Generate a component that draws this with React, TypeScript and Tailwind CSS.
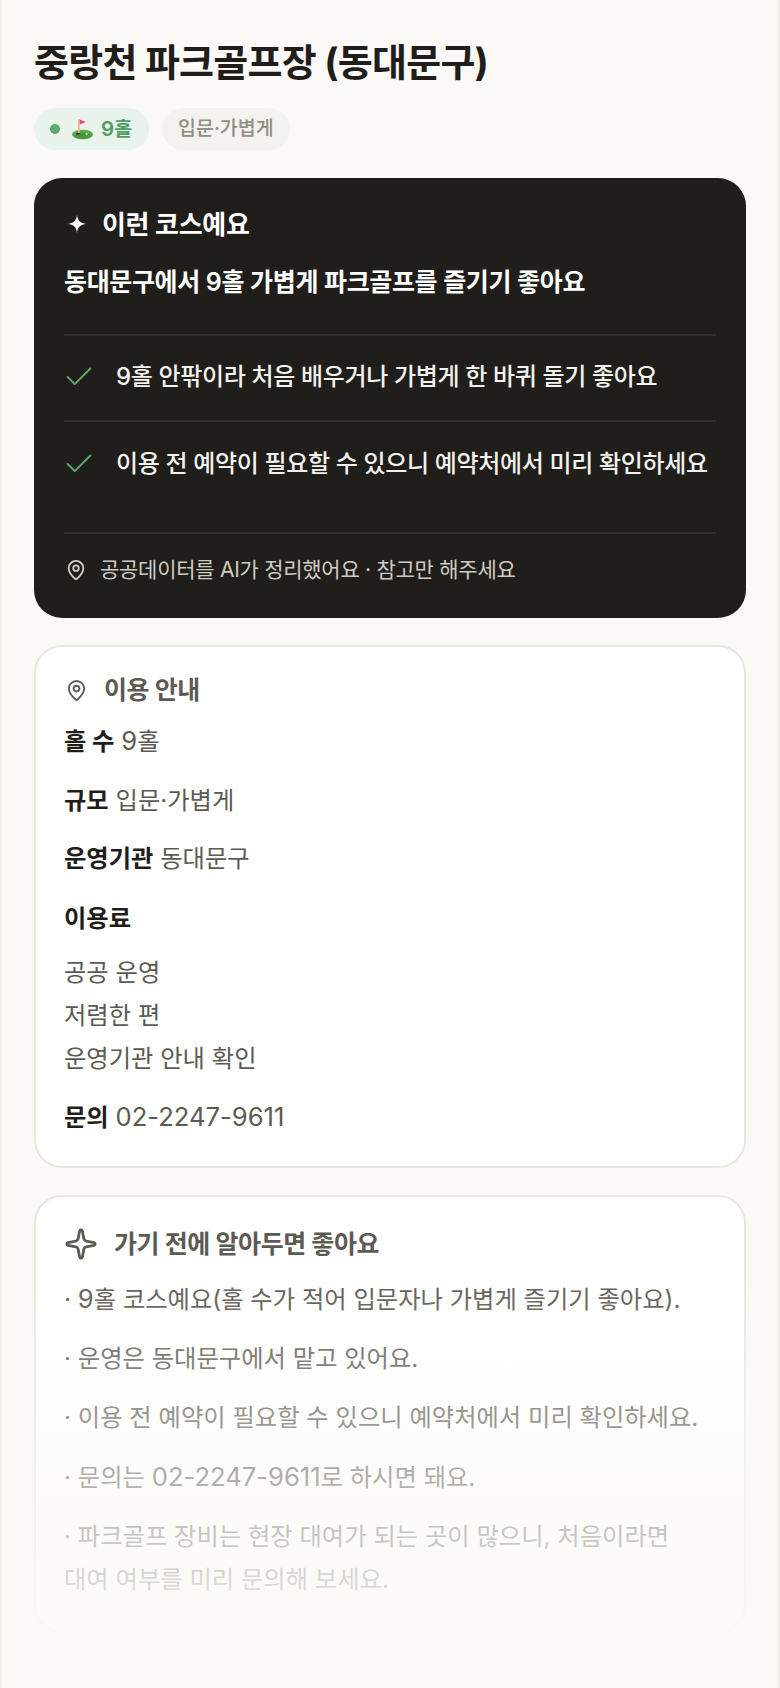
import React from 'react';
import { Check, MapPin, Sparkle } from 'lucide-react';

const highlights = [
  '9홀 안팎이라 처음 배우거나 가볍게 한 바퀴 돌기 좋아요',
  '이용 전 예약이 필요할 수 있으니 예약처에서 미리 확인하세요',
];

const Num = ({ children }: { children: React.ReactNode }) => (
  <span className="text-[25.6px]">{children}</span>
);

const tips = [
  <>· <Num>9</Num>홀 코스예요(홀 수가 적어 입문자나 가볍게 즐기기 좋아요).</>,
  <>· 운영은 동대문구에서 맡고 있어요.</>,
  <>· 이용 전 예약이 필요할 수 있으니 예약처에서 미리 확인하세요.</>,
  <>· 문의는 <Num>02-2247-9611</Num>로 하시면 돼요.</>,
  <>· 파크골프 장비는 현장 대여가 되는 곳이 많으니, 처음이라면 대여 여부를 미리 문의해 보세요.</>,
];

// golf flag emoji, drawn so it looks the same as the reference
const GolfFlag = () => (
  <svg viewBox="0 0 21 21" className="h-[21px] w-[21px] shrink-0">
    <ellipse cx="10.5" cy="15.5" rx="10.5" ry="4.8" fill="#5ba84c" />
    <ellipse cx="10.5" cy="16.8" rx="8" ry="3" fill="#4a9440" />
    <rect x="6" y="0" width="1.7" height="15.5" fill="#f2b58f" />
    <path d="M7.7 0.5L14 3L7.7 5.6Z" fill="#f2477e" />
    <ellipse cx="6.2" cy="14.8" rx="2.2" ry="1.1" fill="#2f3a2c" />
    <circle cx="14.6" cy="15" r="1.1" fill="#d9e0d2" />
  </svg>
);

const App = () => {
  return (
    <div className="relative h-[1688px] overflow-hidden border-x-2 border-[#eeede6] bg-[#faf9f5] px-8 pt-[39px] font-['Inter','Noto_Sans_CJK_KR',sans-serif] text-[#1f1e1b]">
      <h1 className="text-[38px] leading-[46px] font-bold tracking-[-0.75px]">중랑천 파크골프장 (동대문구)</h1>
      <div className="mt-[23px] flex gap-[13px]">
        <span className="flex h-[42px] items-center rounded-full bg-[#e8f3ec] pr-[17px] pl-4 text-[19.5px] font-semibold text-[#4f9d63]">
          <span className="mr-3 h-2.5 w-2.5 rounded-full bg-[#5aaa6c]" />
          <GolfFlag />
          <span className="ml-2"><span className="text-[20.5px]">9</span>홀</span>
        </span>
        <span className="flex h-[42px] items-center rounded-full bg-[#f3f2ee] px-4 text-[19.5px] font-medium text-[#8f8d84]">입문·가볍게</span>
      </div>

      <section className="mt-7 rounded-[28px] bg-[#1f1e1b] px-[30px] pt-[31px] pb-[34px] text-white">
        <div className="flex h-[30px] items-center gap-[15px]">
          <svg viewBox="0 0 24 24" className="ml-[3px] h-5 w-5 shrink-0 fill-white">
            <path d="M12 1C12.6 8 16 11.4 23 12C16 12.6 12.6 16 12 23C11.4 16 8 12.6 1 12C8 11.4 11.4 8 12 1Z" />
          </svg>
          <h2 className="text-[26px] font-bold tracking-[-0.3px]">이런 코스예요</h2>
        </div>
        <p className="mt-[27px] border-b-2 border-[#32312d] pb-[36px] text-[25px] leading-[32px] font-semibold tracking-[-0.35px]">동대문구에서 9홀 가볍게 파크골프를 즐기기 좋아요</p>
        {highlights.map((text, index) => (
          <div key={text} className={`flex h-[86px] items-center gap-5 pb-[2px] ${index === 0 ? 'border-b-2 border-[#32312d]' : ''}`}>
            <Check className="-ml-[2px] h-[34px] w-[34px] shrink-0 text-[#5aaa6c]" strokeWidth={1.4} />
            <span className="text-[24px] font-medium tracking-[-0.35px] text-[#f3f2ec]">{text}</span>
          </div>
        ))}
        <div className="mt-6 flex items-center gap-[13px] border-t-2 border-[#32312d] pt-[22px] text-[#cfccc2]">
          <MapPin className="ml-[1px] h-[22px] w-[22px] shrink-0" strokeWidth={2} />
          <span className="text-[21px] leading-[28px] tracking-[-0.27px]">공공데이터를 AI가 정리했어요 · 참고만 해주세요</span>
        </div>
      </section>

      <section className="mt-[27px] rounded-[28px] border-2 border-[#e8e6df] bg-white px-[28px] pt-[28px] pb-[32px]">
        <div className="flex items-center gap-4 text-[#5c5a53]">
          <MapPin className="ml-[1px] h-[23px] w-[23px] shrink-0" strokeWidth={2} />
          <h2 className="text-[25px] leading-[30px] font-bold tracking-[-0.4px]">이용 안내</h2>
        </div>
        <div className="mt-[19px] text-[24.3px] leading-[34px] text-[#5c5a53]">
          <p><b className="font-bold text-[#1f1e1b]">홀 수</b> <Num>9</Num>홀</p>
          <p className="mt-[25px]"><b className="font-bold text-[#1f1e1b]">규모</b> 입문·가볍게</p>
          <p className="mt-[24px]"><b className="font-bold text-[#1f1e1b]">운영기관</b> 동대문구</p>
          <p className="mt-[26px] font-bold text-[#1f1e1b]">이용료</p>
          <p className="mt-[16px] leading-[43px]">공공 운영<br />저렴한 편<br />운영기관 안내 확인</p>
          <p className="mt-[20px]"><b className="font-bold text-[#1f1e1b]">문의</b> <Num>02-2247-9611</Num></p>
        </div>
      </section>

      <section className="mt-[27px] rounded-[28px] border-2 border-[#e8e6df] bg-white px-[28px] pt-[30px] pb-[30px]">
        <div className="flex items-center gap-4 text-[#5c5a53]">
          <Sparkle className="h-[34px] w-[34px] shrink-0" strokeWidth={2} />
          <h2 className="text-[25px] leading-[32px] font-bold tracking-[-0.4px]">가기 전에 알아두면 좋아요</h2>
        </div>
        <ul className="mt-[16px] break-keep text-[24.3px] leading-[43px] text-[#5c5a53]">
          {tips.map((tip, index) => (
            <li key={index} className={index === 0 ? '' : 'mt-4'}>{tip}</li>
          ))}
        </ul>
      </section>

      <section className="mt-[26px] h-[200px] rounded-[28px] border-2 border-[#e8e6df] bg-white" />

      <div className="pointer-events-none absolute inset-x-0 bottom-0 h-[423px] bg-gradient-to-b from-[#faf9f5]/0 to-[#faf9f5]/97 to-[92%]" />
    </div>
  );
};

export default App;
